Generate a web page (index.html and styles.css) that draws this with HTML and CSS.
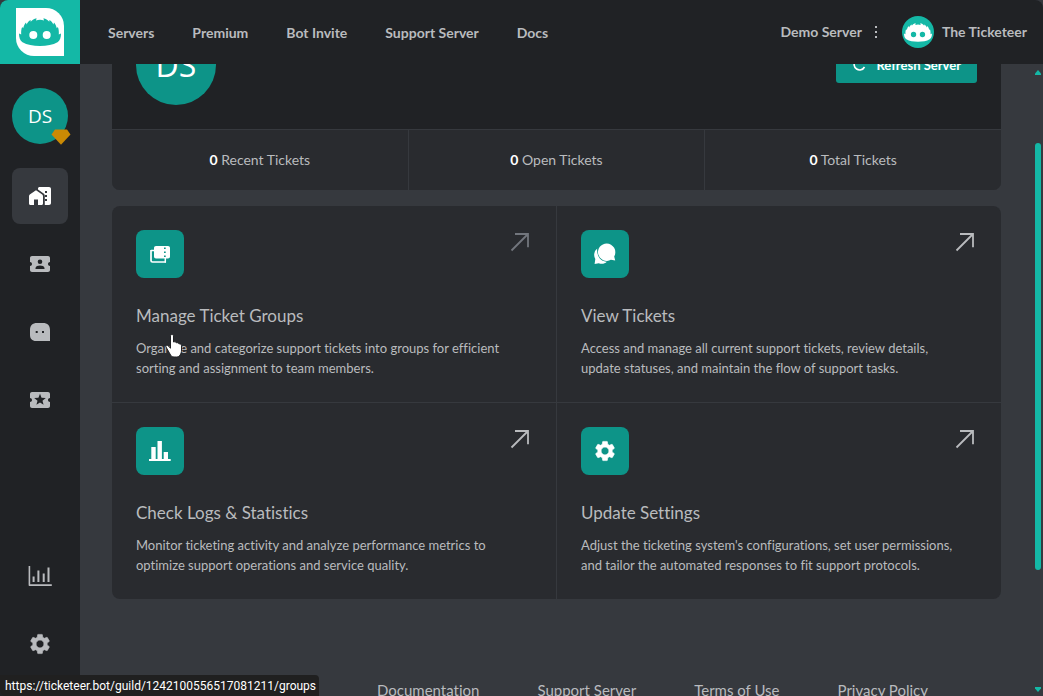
FILE: index.html
```html
<!DOCTYPE html>
<html lang="en">
<head>
<meta charset="utf-8">
<title>Ticketeer</title>
<link rel="stylesheet" href="styles.css">
</head>
<body>
<svg class="defs" aria-hidden="true">
  <symbol id="face" viewBox="0 0 42 28">
    <path fill-rule="evenodd" d="M0 15.500l2.200 1C2 13.500 2.200 11 3.200 9L4.200 10.200C4.700 8 5.500 6 7 4.400l.6 2C8.700 4.500 9.800 3 11.600 2l.1 1.700C13.300 1.800 15.200.8 17.600.2L17 2.600c2.600-1 5.400-1 8 0L24.400.2c2.400.6 4.300 1.600 5.900 3.500l.1-1.700c1.800 1 2.900 2.500 4 4.400l.6-2c1.500 1.600 2.300 3.600 2.800 5.800L38.800 9c1 2 1.200 4.500 1 7.500l2.200-1c0 4-1 7-3.500 8.800C34 27 28 28 21 28S8 27 3.500 24.300C1 22.500 0 19.500 0 15.500zM14.300 13a4 4 0 1 0 0 8 4 4 0 0 0 0-8zM27.700 13a4 4 0 1 0 0 8 4 4 0 0 0 0-8z"/>
  </symbol>
  <symbol id="gear" viewBox="0 0 24 24">
    <path stroke="currentColor" stroke-width=".6" stroke-linejoin="round" d="M19.140 12.940c.04-.3.06-.61.06-.94 0-.32-.02-.64-.07-.94l2.030-1.580c.18-.14.23-.41.12-.61l-1.920-3.320c-.12-.22-.37-.29-.59-.22l-2.390.96c-.5-.38-1.030-.7-1.620-.94l-.36-2.540c-.04-.24-.24-.41-.48-.41h-3.840c-.24 0-.43.17-.47.41l-.36 2.540c-.59.24-1.130.57-1.620.94l-2.390-.96c-.22-.08-.47 0-.59.22L2.740 8.870c-.12.21-.08.47.12.61l2.030 1.580c-.05.3-.09.63-.09.94s.02.64.07.94l-2.030 1.580c-.18.14-.23.41-.12.61l1.920 3.320c.12.22.37.29.59.22l2.390-.96c.5.38 1.030.7 1.620.94l.36 2.540c.05.24.24.41.48.41h3.840c.24 0 .44-.17.47-.41l.36-2.540c.59-.24 1.130-.56 1.620-.94l2.390.96c.22.08.47 0 .59-.22l1.920-3.320c.12-.22.07-.47-.12-.61l-2.010-1.580zM12 15.900c-2.100 0-3.900-1.720-3.900-3.900s1.720-3.900 3.900-3.900 3.900 1.720 3.900 3.900-1.720 3.900-3.900 3.900z"/>
  </symbol>
  <symbol id="arrow" viewBox="0 0 24 24">
    <path d="M3.500 20.500L20 4M7 4h13v13.200" fill="none" stroke="currentColor" stroke-width="1.800"/>
  </symbol>
</svg>

<div class="app">
  <header class="topbar">
    <a class="logo" href="#" aria-label="Ticketeer home"><span class="logo-tile"><svg class="logo-face"><use href="#face"/></svg></span></a>
    <nav class="nav">
      <a href="#">Servers</a>
      <a href="#">Premium</a>
      <a href="#">Bot Invite</a>
      <a href="#">Support Server</a>
      <a href="#">Docs</a>
    </nav>
    <div class="account">
      <button class="server-menu" type="button">Demo Server
        <svg width="4" height="14" viewBox="0 0 4 14"><path d="M1 1h2v2H1zM1 6h2v2H1zM1 11h2v2H1z"/></svg>
      </button>
      <button class="user" type="button"><span class="user-avatar"><svg class="user-face"><use href="#face"/></svg></span>The Ticketeer</button>
    </div>
  </header>

  <div class="body">
    <aside class="sidebar">
      <a class="guild" href="#">DS
        <svg class="gem" width="20" height="16" viewBox="0 0 20 16"><path d="M4 .5h12L19.500 5.500 10 15.800.5 5.500z"/></svg>
      </a>
      <a class="side-item active" href="#" aria-label="Overview">
        <svg width="24" height="24" viewBox="0 0 24 24"><path d="M1 12.200c0-.7.3-1.200.8-1.600l5.100-3.700c.7-.5 1.500-.5 2.200 0l5.100 3.700c.5.4.8.9.8 1.600V19.500c0 .9-.6 1.500-1.500 1.500H10v-5.500H6V21H2.500C1.600 21 1 20.400 1 19.500z"/><path fill-rule="evenodd" d="M10 4.500C10 3.600 10.700 3 11.600 3H21c1.200 0 2 .8 2 2v14c0 1.200-.8 2-2 2h-4.200V11.800c0-1-.4-1.700-1.200-2.300L10 5.500zM17 7v2h2V7zM17 11v2h2v-2zM17 15v2h2v-2z"/></svg>
      </a>
      <a class="side-item" href="#" aria-label="Tickets">
        <svg width="24" height="24" viewBox="0 0 24 24"><path fill-rule="evenodd" d="M20 12c0-1.100.9-2 2-2V6c0-1.100-.9-2-2-2H4c-1.100 0-2 .9-2 2v4c1.100 0 2 .9 2 2s-.9 2-2 2v4c0 1.100.9 2 2 2h16c1.100 0 2-.9 2-2v-4c-1.100 0-2-.9-2-2zM12 7.500a2.300 2.300 0 1 1 0 4.600 2.300 2.300 0 0 1 0-4.600zM7.500 17v-1c0-1.700 2.500-2.500 4.500-2.500s4.500.8 4.500 2.500v1z"/></svg>
      </a>
      <a class="side-item" href="#" aria-label="Messages">
        <svg width="24" height="24" viewBox="0 0 24 24"><path fill-rule="evenodd" d="M9 3h6c4.500 0 7 2.500 7 7v11H8c-4 0-6-2.500-6-6V10c0-4.500 2.500-7 7-7zM7.700 11v2h2v-2zM14 11v2h2v-2z"/></svg>
      </a>
      <a class="side-item" href="#" aria-label="Premium">
        <svg width="24" height="24" viewBox="0 0 24 24"><path fill-rule="evenodd" d="M20 12c0-1.100.9-2 2-2V6c0-1.100-.9-2-2-2H4c-1.100 0-2 .9-2 2v4c1.100 0 2 .9 2 2s-.9 2-2 2v4c0 1.100.9 2 2 2h16c1.100 0 2-.9 2-2v-4c-1.100 0-2-.9-2-2zm-4.420 4.800L12 14.500l-3.580 2.300 1.080-4.120-3.290-2.690 4.240-.25L12 5.800l1.540 3.950 4.240.25-3.290 2.690 1.090 4.110z"/></svg>
      </a>
      <span class="spacer"></span>
      <a class="side-item" href="#" aria-label="Statistics">
        <svg width="24" height="24" viewBox="0 0 24 24"><path d="M.6 2h1.600v18.200h21.600v1.700H1.600c-.6 0-1-.4-1-1zM4.600 12.500h2V18h-2zM9.400 6.500h2V18h-2zM14.700 9.500h2V18h-2zM19.500 3.500h2V18h-2z"/></svg>
      </a>
      <a class="side-item" href="#" aria-label="Settings">
        <svg width="24" height="24"><use href="#gear"/></svg>
      </a>
    </aside>

    <main class="content">
      <section class="hero">
        <div class="hero-top">
          <span class="hero-avatar">DS</span>
          <button class="refresh" type="button">
            <svg width="16" height="16" viewBox="0 0 16 16"><path d="M11.500 3.500A5.500 5.500 0 1 0 12.500 10M12 1v3.500H8.500" fill="none" stroke="currentColor" stroke-width="1.600"/></svg>Refresh Server</button>
        </div>
        <div class="stats">
          <p><b>0</b> Recent Tickets</p>
          <p><b>0</b> Open Tickets</p>
          <p><b>0</b> Total Tickets</p>
        </div>
      </section>

      <section class="cards">
        <a class="card hovered" href="#">
          <span class="card-head">
            <span class="tile"><svg width="24" height="24" viewBox="0 0 24 24"><path d="M3 8v10.500c0 1 .5 1.500 1.500 1.500H18" fill="none" stroke="currentColor" stroke-width="1.700"/><path d="M3 8.500h4M17.300 20.500V16" fill="none" stroke="currentColor" stroke-width="1.500"/><path fill-rule="evenodd" d="M8 4h12c1.200 0 2 .8 2 2v8.500c0 1.200-.8 2-2 2H8c-1.200 0-2-.8-2-2V6c0-1.200.8-2 2-2zM16 5.500V7h1.700V5.500zM16 9.500V11h1.700V9.500zM16 13.500V15h1.700v-1.500z"/></svg></span>
            <svg class="go" width="24" height="24"><use href="#arrow"/></svg>
          </span>
          <h2>Manage Ticket Groups</h2>
          <p>Organize and categorize support tickets into groups for efficient sorting and assignment to team members.</p>
          <svg class="pointer" width="18" height="24" viewBox="0 0 18 24"><path d="M5.500 2c0-1 .8-1.500 1.500-1.500S8.500 1 8.500 2v6c1.500-.5 2.600-.1 2.800.8 1.400-.4 2.400.1 2.600 1 1.700-.2 2.600.6 2.600 1.900v4.300c0 4-2 7-5 7H9c-2 0-3-1-4-3L1 13c-.7-1.400.6-2.300 1.800-1.500l2.700 2.700z"/></svg>
        </a>
        <a class="card" href="#">
          <span class="card-head">
            <span class="tile"><svg width="24" height="24" viewBox="0 0 24 24"><path d="M4.200 6.500A8.200 8.200 0 0 0 2.300 17l-.7 5 4.200-.8c3 1.200 6 .5 8-1.500C7.500 19.500 3.500 14 4.200 6.500z"/><path d="M13.700 1.500a8.700 8.700 0 0 1 7.500 13l1 4-4.300-.7A8.700 8.700 0 1 1 13.700 1.500z"/></svg></span>
            <svg class="go" width="24" height="24"><use href="#arrow"/></svg>
          </span>
          <h2>View Tickets</h2>
          <p>Access and manage all current support tickets, review details, update statuses, and maintain the flow of support tasks.</p>
        </a>
        <a class="card" href="#">
          <span class="card-head">
            <span class="tile"><svg width="24" height="24" viewBox="0 0 24 24"><path d="M1 20h2.300V8h4.400v12h1.800V2h4.400v18h1.800v-7H20v7h2.700v2H1z"/></svg></span>
            <svg class="go" width="24" height="24"><use href="#arrow"/></svg>
          </span>
          <h2>Check Logs &amp; Statistics</h2>
          <p>Monitor ticketing activity and analyze performance metrics to optimize support operations and service quality.</p>
        </a>
        <a class="card" href="#">
          <span class="card-head">
            <span class="tile"><svg width="24" height="24"><use href="#gear"/></svg></span>
            <svg class="go" width="24" height="24"><use href="#arrow"/></svg>
          </span>
          <h2>Update Settings</h2>
          <p>Adjust the ticketing system's configurations, set user permissions, and tailor the automated responses to fit support protocols.</p>
        </a>
      </section>

      <footer class="footer">
        <a href="#">Documentation</a>
        <a href="#">Support Server</a>
        <a href="#">Terms of Use</a>
        <a href="#">Privacy Policy</a>
      </footer>
    </main>

    <div class="scrollbar" aria-hidden="true">
      <svg width="6" height="5" viewBox="0 0 6 5"><path d="M3 0l3 3.500V5H0V3.500z"/></svg>
      <span class="track"><span class="thumb"></span></span>
      <svg width="6" height="5" viewBox="0 0 6 5"><path d="M3 5l3-3.500V0H0v1.500z"/></svg>
    </div>
  </div>

  <div class="status">https://ticketeer.bot/guild/1242100556517081211/groups</div>
</div>
</body>
</html>
```

FILE: styles.css
```css
* { box-sizing: border-box; }

body, h2, p { margin: 0; }

body {
  background: #36393e;
  color: #b9bbbe;
  font: 14px/20px Lato, "Open Sans", sans-serif;
  font-variant-ligatures: none;
}

a { color: inherit; text-decoration: none; }

button {
  border: 0;
  padding: 0;
  background: none;
  color: inherit;
  font: inherit;
  cursor: pointer;
}

svg { display: block; flex: none; fill: currentColor; }

.defs { position: absolute; width: 0; height: 0; }

.app {
  position: relative;
  display: flex;
  flex-direction: column;
  height: 100vh;
  overflow: hidden;
}

.topbar {
  display: flex;
  align-items: center;
  flex: none;
  height: 64px;
  padding-right: 16px;
  border-radius: 8px 8px 0 0;
  overflow: hidden;
  background: #202225;
  font-weight: 700;
}

.logo {
  display: grid;
  place-items: center;
  width: 80px;
  height: 64px;
  background: #14b8a6;
}

.logo-tile {
  display: grid;
  place-items: center;
  width: 48px;
  height: 48px;
  border-radius: 0 18px 0 18px;
  background: #fff;
  color: #14b8a6;
}

.logo-face { width: 42px; height: 28px; }

.nav { display: flex; gap: 38px; padding: 2px 28px 0; }

.account { display: flex; align-items: center; gap: 24px; margin-left: auto; }

.server-menu { display: flex; align-items: center; gap: 12px; }

.user { display: flex; align-items: center; gap: 8px; }

.user-avatar {
  display: grid;
  place-items: center;
  width: 32px;
  height: 32px;
  border-radius: 50%;
  background: #14b8a6;
  color: #fff;
}

.user-face { width: 28px; height: 19px; }

.body { display: flex; flex: 1; min-height: 0; }

.sidebar {
  display: flex;
  flex-direction: column;
  align-items: center;
  gap: 12px;
  flex: none;
  width: 80px;
  padding: 24px 0;
  background: #202225;
}

.guild {
  position: relative;
  display: grid;
  place-items: center;
  width: 56px;
  height: 56px;
  margin-bottom: 12px;
  border-radius: 50%;
  background: #0d9488;
  color: #fff;
  font: 500 19px/24px "Open Sans", sans-serif;
}

.gem { position: absolute; right: -3px; bottom: -1px; color: #ca8a04; }

.side-item {
  display: grid;
  place-items: center;
  width: 56px;
  height: 56px;
  border-radius: 8px;
}

.side-item.active { background: #36393e; color: #fff; }

.spacer { flex: 1; }

.content {
  flex: 1;
  min-width: 0;
  padding: 0 34px 0 32px;
  overflow: hidden;
}

/* The page is scrolled: the top of the hero sits under the top bar. */
.hero {
  margin-top: -63px;
  border-radius: 8px;
  overflow: hidden;
  background: #202225;
}

.hero-top {
  display: flex;
  align-items: center;
  justify-content: space-between;
  padding: 24px;
}

.hero-avatar {
  display: grid;
  place-items: center;
  width: 80px;
  height: 80px;
  border-radius: 50%;
  background: #0d9488;
  color: #fff;
  font: 500 32px/40px "Open Sans", sans-serif;
}

.refresh {
  display: flex;
  align-items: center;
  gap: 8px;
  height: 36px;
  padding: 0 16px;
  border-radius: 3px;
  background: #0d9488;
  color: #fff;
  font-size: 13px;
  font-weight: 700;
}

.stats {
  display: grid;
  grid-template-columns: repeat(3, 1fr);
  gap: 1px;
  padding-top: 1px;
  background: #36393e;
}

.stats p { padding: 20px; background: #292b2f; text-align: center; }

.stats b { color: #fff; font-weight: 700; }

.cards {
  display: grid;
  grid-template-columns: repeat(2, 1fr);
  gap: 1px;
  margin-top: 16px;
  border-radius: 8px;
  overflow: hidden;
  background: #36393e;
}

.card {
  position: relative;
  padding: 24px;
  background: #292b2f;
  font-size: 13px;
}

.card p { padding-right: 12px; }

.card-head { display: flex; justify-content: space-between; }

.tile {
  display: grid;
  place-items: center;
  width: 48px;
  height: 48px;
  border-radius: 8px;
  background: #0d9488;
  color: #fff;
}

.hovered .go { color: #72767d; }

.card h2 {
  margin: 24px 0 8px;
  font-size: 17px;
  font-weight: 400;
  line-height: 28px;
}

.pointer {
  position: absolute;
  left: 53px;
  top: 128px;
  overflow: visible;
  fill: #fff;
  stroke: #202225;
  stroke-width: 1;
}

.footer {
  display: flex;
  justify-content: flex-end;
  gap: 58px;
  padding: 79px 73px 24px 0;
  font-size: 15px;
  line-height: 24px;
}

.scrollbar {
  display: flex;
  flex-direction: column;
  flex: none;
  width: 6px;
  margin-right: 2px;
  padding: 6px 0 4px;
  color: #14b8a6;
}

.track { flex: 1; padding-top: 68px; }

.thumb {
  display: block;
  height: 78.5%;
  border-radius: 3px;
  background: #14b8a6;
}

.status {
  position: absolute;
  left: 0;
  bottom: 0;
  padding: 1px 3px 0 5px;
  border-radius: 0 4px 0 6px;
  background: #202020;
  color: #fff;
  font: 12px/20px Roboto, "Open Sans", sans-serif;
}
```
